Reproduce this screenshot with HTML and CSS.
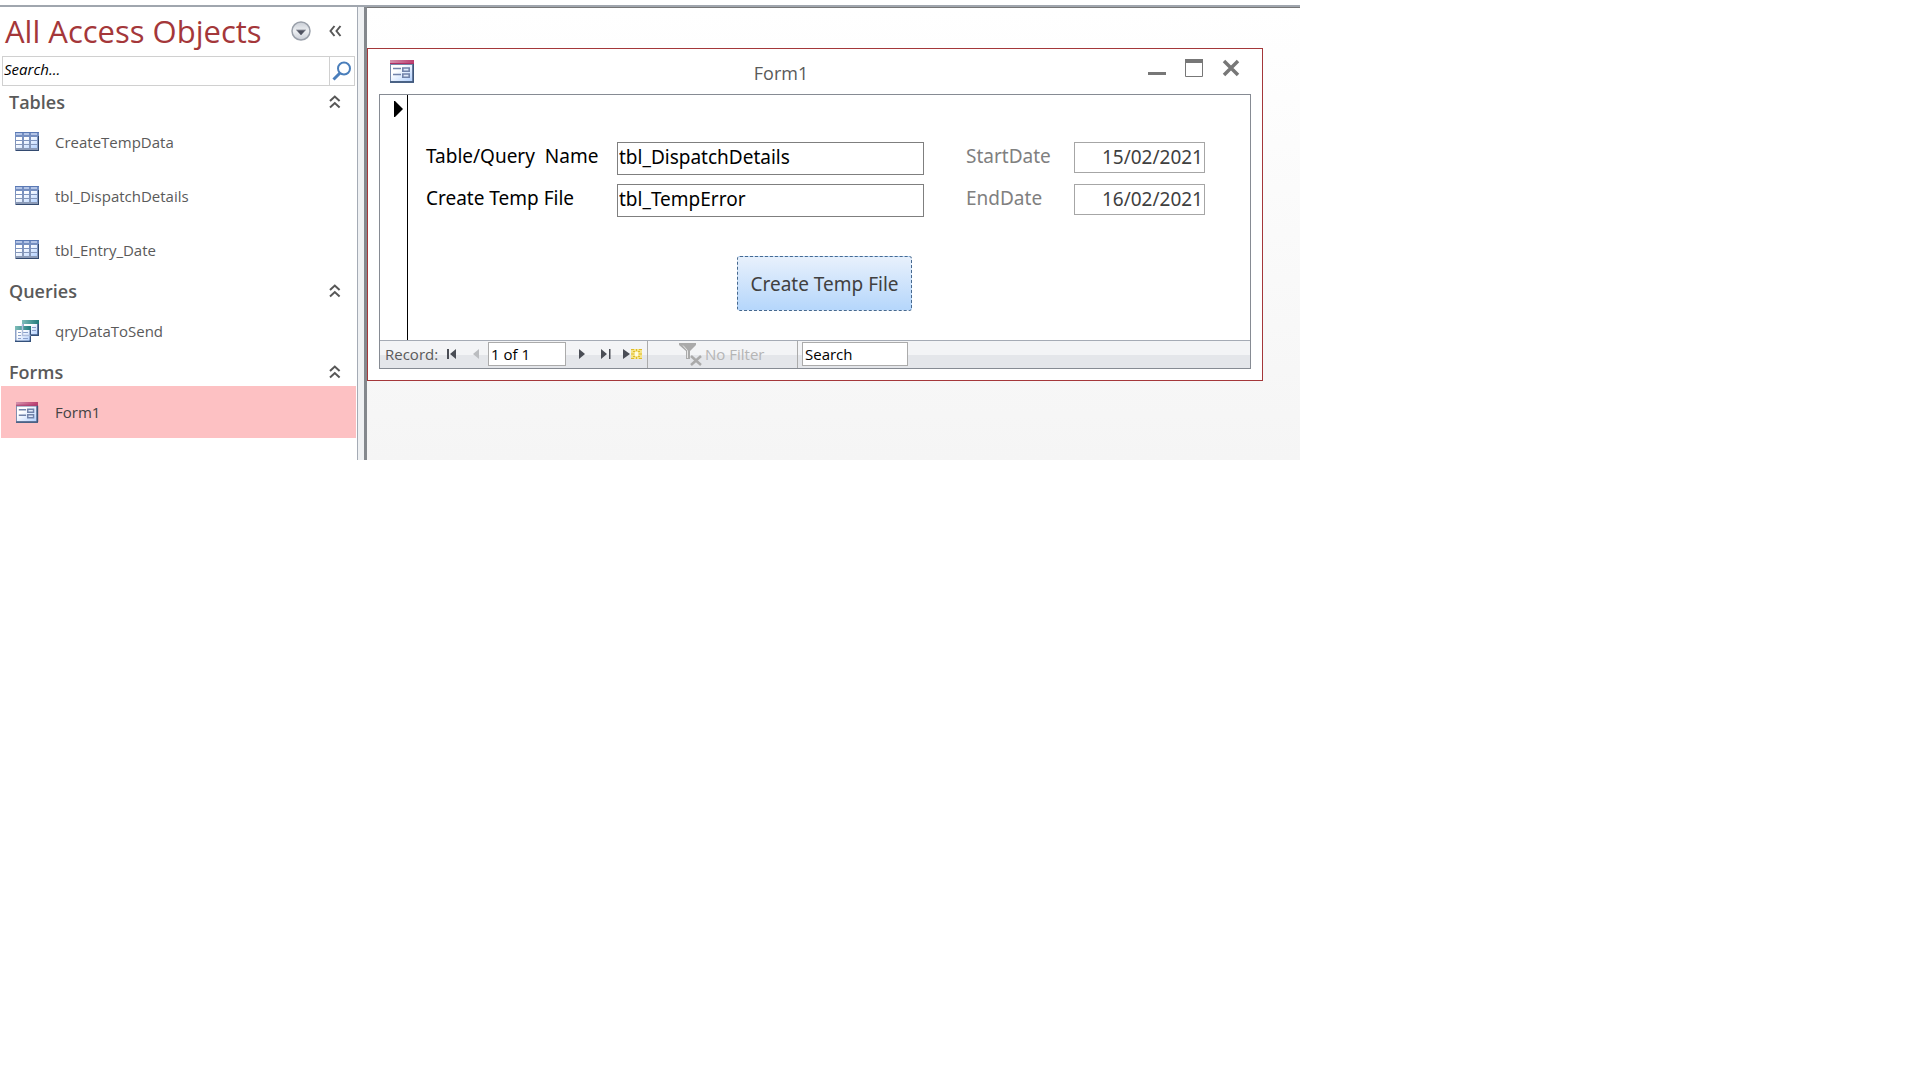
FILE: index.html
```html
<!DOCTYPE html>
<html lang="en">
<head>
    <meta charset="UTF-8">
    <meta name="viewport" content="width=device-width, initial-scale=1.0">
    <title>Form1 - Access</title>
    <link rel="stylesheet" href="styles.css">
</head>
<body>
    <!-- Shared icons -->
    <svg class="sprite" aria-hidden="true">
        <defs>
            <linearGradient id="cellFill" x1="0" y1="0" x2="1" y2="1">
                <stop offset="0.3" stop-color="#ffffff"/>
                <stop offset="1" stop-color="#b4d2ff"/>
            </linearGradient>
            <linearGradient id="gridLine" x1="0" y1="0" x2="0" y2="1">
                <stop offset="0" stop-color="#6f8cc4"/>
                <stop offset="1" stop-color="#8f9cb5"/>
            </linearGradient>
            <linearGradient id="tealBar" x1="0" y1="0" x2="1" y2="0">
                <stop offset="0" stop-color="#7fbdb9"/>
                <stop offset="1" stop-color="#1f7a7c"/>
            </linearGradient>
            <linearGradient id="pinkBar" x1="0" y1="0" x2="1" y2="0">
                <stop offset="0" stop-color="#d391ac"/>
                <stop offset="1" stop-color="#bb3e70"/>
            </linearGradient>
            <linearGradient id="disc" x1="0" y1="0" x2="0" y2="1">
                <stop offset="0" stop-color="#c9ced6"/>
                <stop offset="0.5" stop-color="#eef0f3"/>
                <stop offset="1" stop-color="#c9ced6"/>
            </linearGradient>
            <symbol id="icon-table" viewBox="0 0 24 19">
                <rect width="24" height="19" fill="url(#gridLine)"/>
                <path d="M0 .5h24" stroke="#5a79b4"/>
                <path d="M1 1h6v2H1zM9 1h5v2H9zM16 1h6v2h-6z" fill="#b3c4e6"/>
                <path d="M1 5h6v3H1zM9 5h5v3H9zM16 5h6v3h-6zM1 9h6v3H1zM9 9h5v3H9zM16 9h6v3h-6zM1 13h6v3H1zM9 13h5v3H9zM16 13h6v3h-6z" fill="url(#cellFill)"/>
                <path d="M23.500 4v14.500M1 18.500h23" stroke="#334a70" fill="none"/>
            </symbol>
            <symbol id="icon-query" viewBox="0 0 24 22">
                <rect x="7" width="17" height="16" fill="#33507a"/>
                <rect x="7" width="15.500" height="14.500" fill="#8da2c8"/>
                <rect x="9" y="4" width="13" height="10" fill="url(#cellFill)"/>
                <rect x="7" width="17" height="4" fill="url(#tealBar)"/>
                <path d="M17 7.500h4M17 10.500h4" stroke="#8ba0ca"/>
                <rect y="6" width="16" height="16" fill="#33507a"/>
                <rect y="6" width="14.500" height="14.500" fill="#8da2c8"/>
                <rect x="1.500" y="10" width="13" height="10.500" fill="url(#cellFill)"/>
                <rect y="6" width="16" height="4" fill="url(#tealBar)"/>
                <path d="M3 12.500h3M8 12.500h5M3 15.500h3M8 15.500h5M3 18.500h3M8 18.500h5" stroke="#8ba0ca"/>
                <path d="M7.500 4v11.500h8" stroke="#b0bedb" stroke-width="1.500" fill="none"/>
            </symbol>
            <symbol id="icon-form" viewBox="0 0 24 23">
                <rect width="24" height="23" fill="#7688ab"/>
                <rect x="1" y="5" width="21" height="16" fill="url(#cellFill)"/>
                <rect width="24" height="4" fill="url(#pinkBar)"/>
                <path d="M0 3.500h24" stroke="#b03063"/>
                <path d="M3 8.500h8M3 14.500h8" stroke="#7183aa" stroke-width="1.500"/>
                <path d="M12.800 8h6.400v3.200h-6.400zM12.800 14h6.400v3.200h-6.400z" fill="#dfe8f8" stroke="#7183aa" stroke-width="1.600"/>
                <path d="M0 22h24M23.500 4v18" stroke="#3c5579" stroke-width="1.500"/>
            </symbol>
            <symbol id="icon-collapse" viewBox="0 0 12 14">
                <path d="M1 6l4.800-4.500L10.600 6M1 12.500L5.800 8l4.800 4.500" fill="none" stroke="#575757" stroke-width="2"/>
            </symbol>
        </defs>
    </svg>

    <div class="app">
        <!-- Navigation pane -->
        <nav class="nav-pane">
            <div class="nav-header">
                <h1>All Access Objects</h1>
                <button type="button" class="icon-button" aria-label="Choose category">
                    <svg width="20" height="20" viewBox="0 0 20 20">
                        <circle cx="10" cy="10" r="9" fill="url(#disc)" stroke="#9aa0aa" stroke-width="1.500"/>
                        <path d="M5 9h10M6 9.500h8L10 14z" fill="#4f5260" stroke="#4f5260" stroke-width="0.500"/>
                    </svg>
                </button>
                <button type="button" class="icon-button" aria-label="Close pane">
                    <svg width="13" height="12" viewBox="0 0 13 12">
                        <path d="M5.500 1L1.500 6l4 5M11.500 1l-4 5 4 5" fill="none" stroke="#575757" stroke-width="2"/>
                    </svg>
                </button>
            </div>
            <form class="nav-search">
                <input type="search" placeholder="Search..." aria-label="Search objects">
                <button type="button" aria-label="Search">
                    <svg width="20" height="20" viewBox="0 0 20 20">
                        <circle cx="12" cy="7.500" r="6" fill="none" stroke="#4a7ebb" stroke-width="2"/>
                        <path d="M8 12l-6.500 6.500" stroke="#4a7ebb" stroke-width="3"/>
                    </svg>
                </button>
            </form>

            <section>
                <h2>Tables <button type="button" class="icon-button" aria-label="Collapse Tables"><svg width="12" height="14"><use href="#icon-collapse"/></svg></button></h2>
                <a href="#" class="nav-item"><svg width="24" height="19"><use href="#icon-table"/></svg>CreateTempData</a>
                <a href="#" class="nav-item"><svg width="24" height="19"><use href="#icon-table"/></svg>tbl_DispatchDetails</a>
                <a href="#" class="nav-item"><svg width="24" height="19"><use href="#icon-table"/></svg>tbl_Entry_Date</a>
            </section>
            <section>
                <h2>Queries <button type="button" class="icon-button" aria-label="Collapse Queries"><svg width="12" height="14"><use href="#icon-collapse"/></svg></button></h2>
                <a href="#" class="nav-item"><svg width="24" height="22"><use href="#icon-query"/></svg>qryDataToSend</a>
            </section>
            <section>
                <h2>Forms <button type="button" class="icon-button" aria-label="Collapse Forms"><svg width="12" height="14"><use href="#icon-collapse"/></svg></button></h2>
                <a href="#" class="nav-item selected"><svg width="24" height="21"><use href="#icon-form"/></svg>Form1</a>
            </section>
        </nav>
        <div class="splitter"></div>

        <!-- Workspace with the open form -->
        <main class="workspace">
            <div class="window">
                <header class="title-bar">
                    <svg width="24" height="23"><use href="#icon-form"/></svg>
                    <span class="title">Form1</span>
                    <div class="window-buttons">
                        <button type="button" class="icon-button" aria-label="Minimize">
                            <svg width="18" height="18" viewBox="0 0 18 18"><path d="M0 14.500h18" stroke="#777" stroke-width="3"/></svg>
                        </button>
                        <button type="button" class="icon-button" aria-label="Maximize">
                            <svg width="18" height="18" viewBox="0 0 18 18"><path d="M.5.500h17v17H.5z" fill="none" stroke="#777"/><path d="M0 2h18" stroke="#777" stroke-width="4"/></svg>
                        </button>
                        <button type="button" class="icon-button" aria-label="Close">
                            <svg width="18" height="18" viewBox="0 0 18 18"><path d="M2 2l14 14M16 2L2 16" stroke="#777" stroke-width="3.500"/></svg>
                        </button>
                    </div>
                </header>

                <div class="form-frame">
                    <div class="form-body">
                        <div class="record-selector">
                            <svg width="9" height="16" viewBox="0 0 9 16"><path d="M0 0h1l8 8-8 8H0z" fill="#000"/></svg>
                        </div>
                        <form class="detail">
                            <div class="fields">
                                <label for="tableName">Table/Query  Name</label>
                                <input type="text" id="tableName" value="tbl_DispatchDetails">
                                <label for="startDate" class="muted">StartDate</label>
                                <input type="text" id="startDate" class="date" value="15/02/2021">
                                <label for="tempFile">Create Temp File</label>
                                <input type="text" id="tempFile" value="tbl_TempError">
                                <label for="endDate" class="muted">EndDate</label>
                                <input type="text" id="endDate" class="date" value="16/02/2021">
                            </div>
                            <button type="button" class="create-button">Create Temp File</button>
                        </form>
                    </div>

                    <!-- Record navigation -->
                    <footer class="record-bar">
                        <div class="record-group">
                            <label for="recordNo">Record:</label>
                            <button type="button" class="icon-button" aria-label="First record">
                                <svg width="10" height="10" viewBox="0 0 10 10"><path d="M0 0h2v10H0zM9 0v10L3 5z" fill="#4a4d55"/></svg>
                            </button>
                            <button type="button" class="icon-button" aria-label="Previous record">
                                <svg width="10" height="10" viewBox="0 0 10 10"><path d="M8 0v10L2 5z" fill="#bbbdc0"/></svg>
                            </button>
                            <input type="text" id="recordNo" value="1 of 1">
                            <button type="button" class="icon-button" aria-label="Next record">
                                <svg width="10" height="10" viewBox="0 0 10 10"><path d="M2 0v10l6-5z" fill="#4a4d55"/></svg>
                            </button>
                            <button type="button" class="icon-button" aria-label="Last record">
                                <svg width="10" height="10" viewBox="0 0 10 10"><path d="M0 0v10l6-5zM8 0h1.500v10H8z" fill="#4a4d55"/></svg>
                            </button>
                            <button type="button" class="icon-button" aria-label="New record">
                                <svg width="19" height="12" viewBox="0 0 19 12">
                                    <path d="M0 1v10l7-5z" fill="#4a4d55"/>
                                    <rect x="8" y="1" width="11" height="10" fill="#f4e48a"/>
                                    <path d="M8 1.500h3M16 1.500h3M8 10.500h3M16 10.500h3M13.500 1v2M13.500 9v2M8 6h3M16 6h3M10 3.500h2M15 3.500h2M10 8.500h2M15 8.500h2" stroke="#e0bb28"/>
                                    <path d="M12 4h3v4h-3z" fill="#fffbe0"/>
                                </svg>
                            </button>
                        </div>
                        <div class="filter-group">
                            <button type="button" class="filter-button" disabled>
                                <svg width="23" height="23" viewBox="0 0 23 23">
                                    <path d="M0 0h17v2l-6 6v8H7V8L0 2z" fill="#aaa"/>
                                    <path d="M4 2.500l4.500 5V15" stroke="#e6e6e6" fill="none"/>
                                    <path d="M12 13l10 9M22 13l-10 9" stroke="#aaa" stroke-width="2.500"/>
                                </svg>
                                No Filter
                            </button>
                        </div>
                        <div class="search-group">
                            <input type="text" value="Search" aria-label="Search records">
                        </div>
                    </footer>
                </div>
            </div>
        </main>
    </div>
</body>
</html>
```
FILE: styles.css
```css
* {
    box-sizing: border-box;
}

body {
    font-family: "Open Sans", "Noto Sans", sans-serif;
    font-size: 15px;
    background-color: #fff;
    color: #5a5a5a;
    margin: 0;
    padding: 5px 0 0;
}

svg {
    display: block;
    flex: none;
}

button,
input {
    font: inherit;
    color: inherit;
    margin: 0;
}

.sprite {
    position: absolute;
    width: 0;
    height: 0;
}

.icon-button {
    padding: 0;
    border: none;
    background: none;
}

.app {
    display: flex;
    max-width: 1300px;
    border-top: 2px solid #a0a6ae;
}

/* Navigation pane */
.nav-pane {
    flex: none;
    width: 358px;
    padding-bottom: 22px;
    border-right: 1px solid #a5abb5;
}

.nav-header {
    display: flex;
    align-items: center;
    height: 49px;
    padding: 0 15px 2px 5px;
    gap: 18px;
}

h1 {
    flex: 1;
    margin: 0;
    font-size: 31px;
    font-weight: normal;
    line-height: 48px;
    color: #a4373a;
    white-space: nowrap;
}

.nav-search {
    display: flex;
    height: 30px;
    margin: 0 2px 3px;
    border: 1px solid #d0d0d0;
}

.nav-search input {
    flex: 1;
    min-width: 0;
    padding: 0 1px 4px;
    border: none;
    font-style: italic;
}

.nav-search input::placeholder {
    color: #000;
    opacity: 1;
}

.nav-search button {
    display: flex;
    align-items: center;
    padding: 0 2px;
    border: none;
    border-left: 1px solid #d0d0d0;
    background: none;
}

h2 {
    display: flex;
    align-items: center;
    justify-content: space-between;
    height: 27px;
    margin: 0;
    padding: 0 16px 1px 9px;
    font-size: 18px;
    font-weight: 600;
}

.nav-item {
    display: flex;
    align-items: center;
    gap: 16px;
    height: 54px;
    margin: 0 1px;
    padding: 0 14px 3px;
    color: inherit;
    text-decoration: none;
}

.nav-item.selected {
    height: 52px;
    padding-bottom: 0;
    background-color: #fdc1c3;
    color: #444;
}

.splitter {
    flex: none;
    width: 9px;
    border-right: 3px solid #84888d;
    background-color: #eff1f3;
}

/* Workspace */
.workspace {
    flex: 1;
    min-width: 0;
    padding: 40px 37px 0 0;
    border-top: 1px solid #777;
    background: linear-gradient(#fff, #f5f5f5);
}

.window {
    padding: 0 11px;
    padding-bottom: 11px;
    border: 1px solid #a4373a;
    background-color: #fff;
}

.title-bar {
    display: flex;
    align-items: center;
    height: 45px;
    padding: 0 11px;
}

.title {
    flex: 1;
    padding-top: 3px;
    font-size: 18px;
    text-align: center;
}

.window-buttons {
    display: flex;
    gap: 19px;
    padding-bottom: 8px;
}

.form-frame {
    border: 1px solid #868b93;
}

.form-body {
    display: flex;
    font-family: "Noto Sans", "Open Sans", sans-serif;
    font-size: 19px;
    color: #000;
}

.record-selector {
    flex: none;
    width: 28px;
    padding: 6px 0 0 14px;
    border-right: 1px solid #000;
}

.detail {
    flex: 1;
    padding: 47px 45px 29px 18px;
}

.fields {
    display: grid;
    grid-template-columns: 191px 307px 1fr 131px;
    row-gap: 9px;
}

.fields label {
    line-height: 28px;
    white-space: pre;
}

.fields input {
    width: 100%;
    height: 33px;
    padding: 0 1px 4px;
    border: 1px solid #7f7f7f;
    background-color: #fff;
}

.fields .muted {
    padding-left: 42px;
    color: #808080;
}

.fields .date {
    height: 31px;
    padding-bottom: 2px;
    border-color: #a6a6a6;
    color: #404040;
    text-align: right;
}

.create-button {
    display: block;
    min-width: 175px;
    height: 55px;
    margin: 39px 0 0 311px;
    padding: 0 9px;
    border: 1px dashed #46698f;
    border-radius: 3px;
    background: linear-gradient(#e8f1fc, #b5d6fb);
    color: #404040;
    white-space: nowrap;
}

/* Record navigation bar */
.record-bar {
    display: flex;
    height: 28px;
    border-top: 1px solid #a5abb5;
    background: linear-gradient(#f3f4f6 50%, #e4e6ea 50%);
}

.record-bar input {
    height: 24px;
    padding: 0 2px 1px;
    border: 1px solid #ababab;
    background-color: #fff;
    color: #000;
}

.record-group,
.filter-group,
.search-group {
    display: flex;
    align-items: center;
    padding-bottom: 1px;
}

.record-group {
    width: 268px;
    padding-left: 5px;
    border-right: 1px solid #ababab;
}

.record-group label {
    width: 55px;
    white-space: nowrap;
}

.record-group input {
    width: 78px;
    margin-right: 4px;
}

.record-group .icon-button {
    display: flex;
    justify-content: center;
    width: 24px;
}

.record-group .icon-button:last-child {
    width: 28px;
}

.filter-group {
    width: 150px;
    padding-left: 31px;
    border-right: 1px solid #ababab;
}

.filter-button {
    display: flex;
    align-items: center;
    gap: 3px;
    padding: 0;
    border: none;
    background: none;
    color: #b5b5b5;
}

.search-group {
    padding-left: 4px;
}

.search-group input {
    width: 106px;
}
```
